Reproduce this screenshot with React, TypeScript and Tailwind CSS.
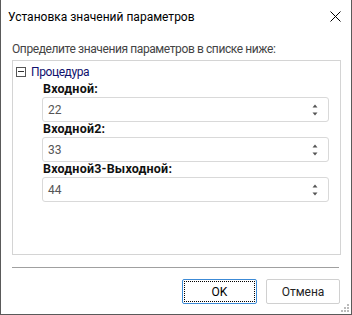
import React from "react";

const font = { fontFamily: 'Roboto, "Noto Sans", sans-serif' };

function Spinner() {
  return (
    <div className="flex flex-col items-center gap-[4px] mr-[10px]">
      <svg width="6" height="4" viewBox="0 0 6 4">
        <path d="M0.5 3.5 L3 0.5 L5.5 3.5 Z" fill="#555" />
      </svg>
      <svg width="6" height="4" viewBox="0 0 6 4">
        <path d="M0.5 0.5 L5.5 0.5 L3 3.5 Z" fill="#555" />
      </svg>
    </div>
  );
}

function Field({ label, value }: { label: string; value: string }) {
  return (
    <div className="flex flex-col">
      <div className="h-[15px] flex items-center pl-[1px] text-[12.5px] tracking-[0.2px] font-bold text-[#111] leading-none">{label}</div>
      <div className="h-[25px] w-[287px] border border-[#d9d9d9] rounded-[3px] flex items-center justify-between bg-white">
        <span className="pl-[5px] text-[12px] text-[#555]">{value}</span>
        <Spinner />
      </div>
    </div>
  );
}

export default function App() {
  return (
    <div style={font} className="w-[352px] h-[315px] bg-white border-l border-r border-b border-[#5a5a5a] flex flex-col relative overflow-hidden">
      <div className="h-[31px] flex items-center justify-between pl-[7px] pr-[10px] pt-[2px]">
        <span className="text-[12px] text-black">Установка значений параметров</span>
        <svg width="11" height="11" viewBox="0 0 11 11">
          <path d="M0.5 0.5 L10.5 10.5 M10.5 0.5 L0.5 10.5" stroke="#000" strokeWidth="1" />
        </svg>
      </div>
      <div className="pl-[11px] h-[29px] pt-[6px] flex items-center text-[12px] tracking-[-0.4px] text-[#444]">
        Определите значения параметров в списке ниже:
      </div>
      <div className="ml-[11px] w-[329px] h-[195px] border border-[#d4d4d4] flex flex-col">
        <div className="h-[21px] flex items-center pl-[3px]">
          <div className="w-[10px] h-[10px] border border-[#555] flex items-center justify-center">
            <div className="w-[6px] h-[1px] bg-[#333]" />
          </div>
          <span className="ml-[5px] text-[12px] tracking-[-0.4px] text-[#10106e]">Процедура</span>
        </div>
        <div className="pl-[29px] flex flex-col">
          <Field label="Входной:" value="22" />
          <Field label="Входной2:" value="33" />
          <Field label="Входной3-Выходной:" value="44" />
        </div>
      </div>
      <div className="ml-[11px] mt-[12px] w-[327px] h-[1px] bg-[#a0a0a0]" />
      <div className="flex justify-end gap-[9px] mt-[11px] pr-[11px]">
        <button className="w-[75px] h-[25px] border border-[#3c8ad6] rounded-[2px] bg-white p-[1px]">
          <div className="w-full h-full border border-dotted border-black flex items-center justify-center text-[12px] text-black">OK</div>
        </button>
        <button className="w-[74px] h-[25px] border border-[#d0d0d0] rounded-[2px] bg-white flex items-center justify-center text-[12px] text-[#222]">
          Отмена
        </button>
      </div>
      <svg className="absolute right-[1px] bottom-[1px]" width="10" height="10" viewBox="0 0 10 10">
        <rect x="7" y="1" width="2" height="2" fill="#bbb" />
        <rect x="4" y="4" width="2" height="2" fill="#bbb" />
        <rect x="7" y="4" width="2" height="2" fill="#bbb" />
        <rect x="1" y="7" width="2" height="2" fill="#bbb" />
        <rect x="4" y="7" width="2" height="2" fill="#bbb" />
        <rect x="7" y="7" width="2" height="2" fill="#bbb" />
      </svg>
    </div>
  );
}
